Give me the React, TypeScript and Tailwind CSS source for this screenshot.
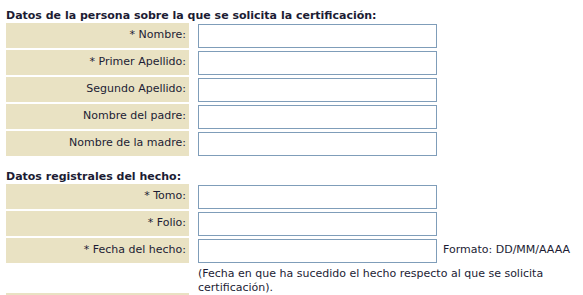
import React from 'react'

const font = { fontFamily: '"DejaVu Sans", Verdana, sans-serif' }

const Field: React.FC<{ label: string; extra?: string }> = ({ label, extra }) => (
  <div className="flex items-center h-[25px]">
    <div className="w-[183px] h-[25px] shrink-0 bg-[#e9e2c3] flex items-center justify-end pr-[3px] text-[11px] text-[#1c1c34]">
      {label}
    </div>
    <input
      type="text"
      className="ml-[9px] w-[239px] h-[24px] shrink-0 border border-[#7f9db9] bg-white outline-none"
    />
    {extra && <span className="ml-[6px] text-[11px] text-[#1c1c34] whitespace-nowrap">{extra}</span>}
  </div>
)

export default function App() {
  return (
    <div className="bg-white w-[583px] h-[295px] overflow-hidden pl-[6px] pt-[9px]" style={font}>
      {/* Persona */}
      <h3 className="h-[14px] leading-[14px] text-[11px] font-bold text-[#1c1c34] whitespace-nowrap">
        Datos de la persona sobre la que se solicita la certificación:
      </h3>
      <div className="flex flex-col gap-[2px]">
        <Field label="* Nombre:" />
        <Field label="* Primer Apellido:" />
        <Field label="Segundo Apellido:" />
        <Field label="Nombre del padre:" />
        <Field label="Nombre de la madre:" />
      </div>

      {/* Registro */}
      <h3 className="mt-[14px] h-[14px] leading-[14px] text-[11px] font-bold text-[#1c1c34] whitespace-nowrap">
        Datos registrales del hecho:
      </h3>
      <div className="flex flex-col gap-[2px]">
        <Field label="* Tomo:" />
        <Field label="* Folio:" />
        <Field label="* Fecha del hecho:" extra="Formato: DD/MM/AAAA" />
        <div className="flex h-[26px]">
          <div className="w-[183px] shrink-0" />
          <p className="ml-[9px] w-[372px] pt-[2px] text-[11px] leading-[14px] text-[#1c1c34]">
            (Fecha en que ha sucedido el hecho respecto al que se solicita certificación).
          </p>
        </div>
        <div className="w-[183px] h-[25px] bg-[#e9e2c3]" />
      </div>
    </div>
  )
}
